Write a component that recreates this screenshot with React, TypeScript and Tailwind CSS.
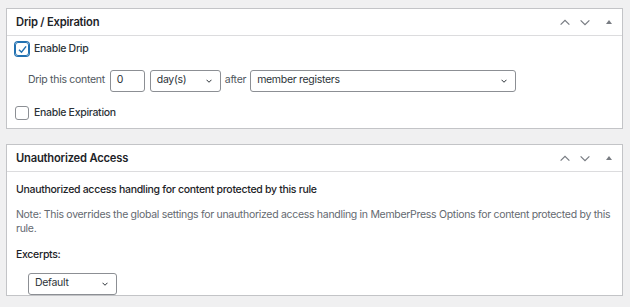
import { useState } from "react";

function Chevron({ className = "", width = 1.4 }: { className?: string; width?: number }) {
  return (
    <svg
      viewBox="0 0 12 8"
      className={className}
      fill="none"
      stroke="currentColor"
      strokeWidth={width}
    >
      <path d="M1 1.5 6 6.5 11 1.5" />
    </svg>
  );
}

function PanelHeader({ title }: { title: string }) {
  return (
    <div className="flex h-[27px] items-center justify-between border-b border-[#dcdcde]">
      <h2 className="pl-[9px] text-[11.2px] font-semibold tracking-[-0.2px] text-[#1d2327]">
        {title}
      </h2>
      <div className="flex h-full items-center text-[#787c82]">
        <button className="flex h-full w-[20px] items-center justify-center">
          <Chevron className="h-[7px] w-[12px] rotate-180" />
        </button>
        <button className="flex h-full w-[20px] items-center justify-center">
          <Chevron className="h-[7px] w-[12px]" />
        </button>
        <button className="flex h-full w-[27px] items-center justify-center">
          <svg viewBox="0 0 6 4" className="h-[4px] w-[6px]" fill="currentColor">
            <path d="M0 4 3 0 6 4Z" />
          </svg>
        </button>
      </div>
    </div>
  );
}

function Checkbox({ checked }: { checked: boolean }) {
  return (
    <span
      className={
        checked
          ? "flex h-[14px] w-[14px] items-center justify-center rounded-[3px] border border-[#2271b1] shadow-[0_0_0_1px_#2271b1]"
          : "flex h-[14px] w-[14px] items-center justify-center rounded-[3px] border border-[#8c8f94]"
      }
    >
      {checked && (
        <svg viewBox="0 0 12 12" className="h-[11px] w-[11px]" fill="none" stroke="#2271b1" strokeWidth="1.6">
          <path d="M2.2 6.2 4.9 8.9 9.9 2.6" />
        </svg>
      )}
    </span>
  );
}

function Select({ value, width }: { value: string; width: string }) {
  return (
    <div
      className={`flex h-[22px] items-center justify-between rounded-[3px] border border-[#8c8f94] bg-white pl-[6px] pr-[8px] text-[#2c3338] ${width}`}
    >
      <span>{value}</span>
      <Chevron className="h-[4px] w-[6px] text-[#2c3338]" width={2} />
    </div>
  );
}

export default function App() {
  const [drip] = useState(true);

  return (
    <div
      className="h-[307px] overflow-hidden bg-[#f0f0f1] pl-[6px] pr-[7px] pt-[8px] text-[10.5px] leading-[14.6px] tracking-[-0.3px] text-[#2c3338]"
      style={{ fontFamily: "Inter, 'Liberation Sans', sans-serif" }}
    >
      {/* Drip / Expiration */}
      <div className="border border-[#c3c4c7] bg-white">
        <PanelHeader title="Drip / Expiration" />
        <div className="px-[8px] pb-[8px] pt-[6px]">
          <label className="flex items-center gap-[5px]">
            <Checkbox checked={drip} />
            <span className="font-medium">Enable Drip</span>
          </label>
          <div className="mt-[13px] flex items-center pl-[13px]">
            <span className="text-[#50575e]">Drip this content</span>
            <div className="ml-[5px] flex h-[22px] w-[35px] items-center rounded-[3px] border border-[#8c8f94] pl-[6px]">
              0
            </div>
            <div className="ml-[5px]">
              <Select value="day(s)" width="w-[71px]" />
            </div>
            <span className="ml-[4px] text-[#50575e]">after</span>
            <div className="ml-[4px]">
              <Select value="member registers" width="w-[266px]" />
            </div>
          </div>
          <label className="mt-[14px] flex items-center gap-[5px]">
            <Checkbox checked={false} />
            <span className="font-medium">Enable Expiration</span>
          </label>
        </div>
      </div>

      {/* Unauthorized Access */}
      <div className="mt-[15px] border border-[#c3c4c7] bg-white">
        <PanelHeader title="Unauthorized Access" />
        <div className="px-[9px] pt-[11px]">
          <p className="font-medium text-[#1d2327]">
            Unauthorized access handling for content protected by this rule
          </p>
          <p className="mt-[10px] text-[#646970]">
            Note: This overrides the global settings for unauthorized access
            handling in MemberPress Options for content protected by this rule.
          </p>
          <p className="mt-[11px] font-medium text-[#1d2327]">Excerpts:</p>
          <div className="mt-[10px] pl-[12px]">
            <Select value="Default" width="w-[89px]" />
          </div>
        </div>
      </div>
    </div>
  );
}
